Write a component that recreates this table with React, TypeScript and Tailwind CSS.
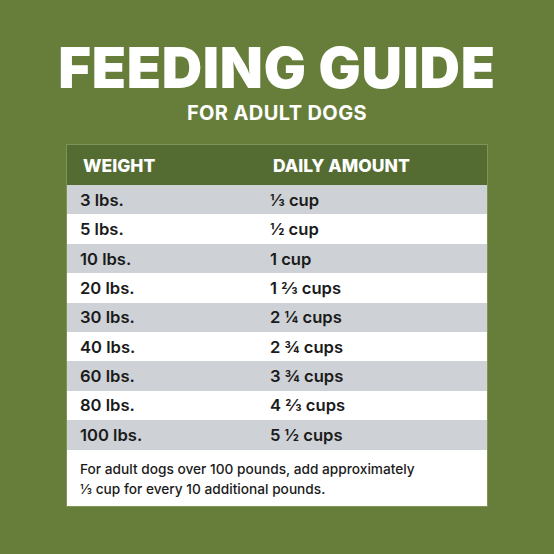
import React from "react";

const rows = [
  ["3 lbs.", "⅓ cup"],
  ["5 lbs.", "½ cup"],
  ["10 lbs.", "1 cup"],
  ["20 lbs.", "1 ⅔ cups"],
  ["30 lbs.", "2 ¼ cups"],
  ["40 lbs.", "2 ¾ cups"],
  ["60 lbs.", "3 ¾ cups"],
  ["80 lbs.", "4 ⅔ cups"],
  ["100 lbs.", "5 ½ cups"],
];

const App = () => {
  return (
    <div
      className="w-[554px] h-[554px] bg-[#667e3a] flex flex-col items-center pt-[36px]"
      style={{ fontFamily: "Inter, 'Liberation Sans', sans-serif" }}
    >
      <h1 className="text-white font-black text-[56px] leading-[64px] tracking-[0.7px]">
        FEEDING GUIDE
      </h1>
      <h2 className="text-white font-bold text-[20px] leading-[24px] mt-[1px] tracking-[0.4px]">
        FOR ADULT DOGS
      </h2>

      <div className="mt-[19px] w-[422px] bg-white border border-[#7d9456]">
        <div className="h-[40px] bg-[#546c31] flex items-center px-[16px] pt-[3px] text-white font-extrabold text-[17.5px]">
          <span className="w-[190px]">WEIGHT</span>
          <span>DAILY AMOUNT</span>
        </div>
        {rows.map(([w, amt], i) => (
          <div
            key={w}
            className={
              "h-[29.4px] flex items-center px-[13px] pt-[1px] text-[#1b1b1b] font-semibold text-[16.6px] " +
              (i % 2 === 0 ? "bg-[#ced1d5]" : "bg-white")
            }
          >
            <span className="w-[190px]">{w}</span>
            <span>{amt}</span>
          </div>
        ))}
        <div className="px-[13px] pt-[9px] pb-[7px] text-[#1b1b1b] font-medium text-[13.7px] leading-[20px]">
          For adult dogs over 100 pounds, add approximately
          <br />⅓ cup for every 10 additional pounds.
        </div>
      </div>
    </div>
  );
};

export default App;
